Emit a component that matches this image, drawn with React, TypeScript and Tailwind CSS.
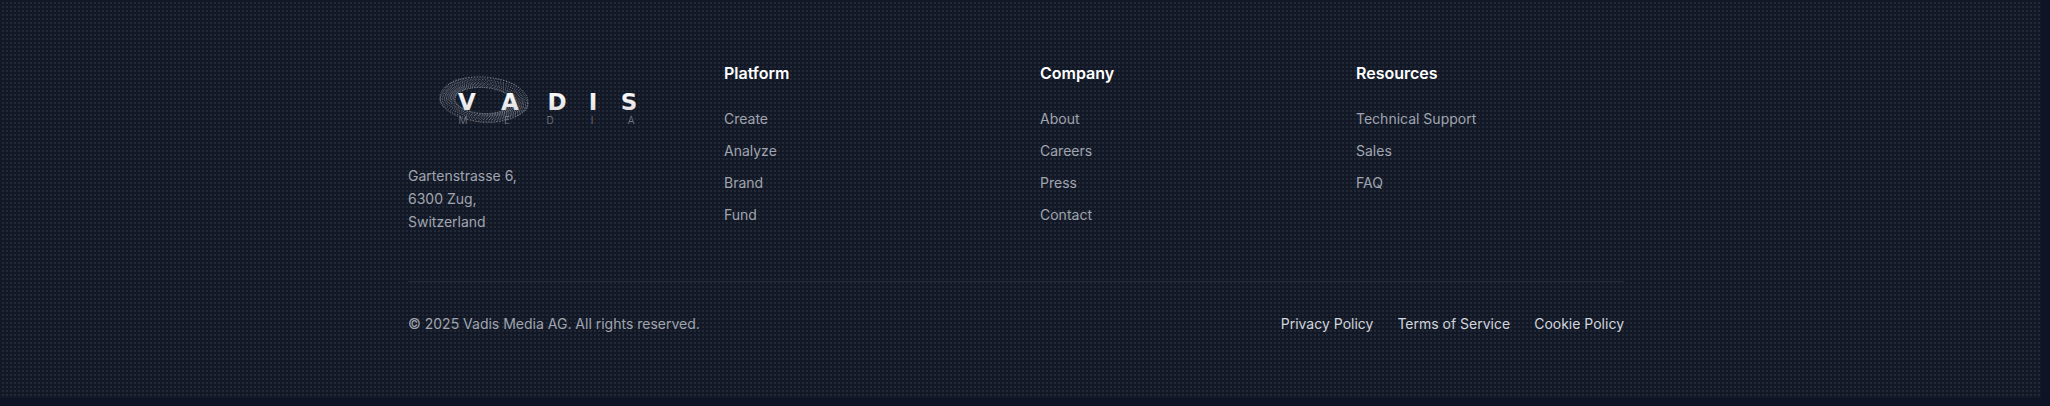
const columns = [
  { title: "Platform", links: ["Create", "Analyze", "Brand", "Fund"] },
  { title: "Company", links: ["About", "Careers", "Press", "Contact"] },
  { title: "Resources", links: ["Technical Support", "Sales", "FAQ"] },
];

const legal = ["Privacy Policy", "Terms of Service", "Cookie Policy"];

// Fine strands that sweep from the outer rim of the ring to its inner rim.
const strands = Array.from({ length: 84 }, (_, i) => {
  const a = (i / 84) * Math.PI * 2;
  const b = a + 0.38;
  const wobble = 1 + 0.03 * Math.sin(a * 5);
  const x1 = 48 + 44 * wobble * Math.cos(a);
  const y1 = 31.5 + 22.5 * wobble * Math.sin(a) + 2.5 * Math.cos(a);
  const x2 = 47 + 28 * Math.cos(b);
  const y2 = 32.5 + 13 * Math.sin(b) + 1.5 * Math.cos(b);
  return `M${x1.toFixed(1)} ${y1.toFixed(1)}L${x2.toFixed(1)} ${y2.toFixed(1)}`;
}).join("");

const word = [
  ["V", 31],
  ["A", 74],
  ["D", 121],
  ["I", 157],
  ["S", 193],
] as const;

const subWord = [
  ["M", 27],
  ["E", 71],
  ["D", 114],
  ["I", 156],
  ["A", 195],
] as const;

function Logo() {
  return (
    <svg viewBox="0 0 212 64" className="h-16 w-[212px]" role="img" aria-label="Vadis Media">
      <defs>
        <linearGradient id="metal" x1="0" y1="0" x2="0" y2="1">
          <stop offset="0" stopColor="#ffffff" />
          <stop offset="1" stopColor="#dcdce0" />
        </linearGradient>
      </defs>
      <g fill="none" stroke="#b8bcc4">
        <path d={strands} strokeWidth="0.9" strokeDasharray="1.2 1" opacity="0.5" />
        <ellipse cx="48" cy="31.5" rx="44" ry="22.5" strokeWidth="0.8" strokeDasharray="1.5 1.2" opacity="0.6" transform="rotate(4 48 31.5)" />
        <ellipse cx="48" cy="31.5" rx="39" ry="19.5" strokeWidth="0.6" strokeDasharray="1 1.6" opacity="0.4" transform="rotate(6 48 31.5)" />
        <ellipse cx="47" cy="32" rx="33" ry="16" strokeWidth="0.6" strokeDasharray="1 1.6" opacity="0.4" transform="rotate(3 47 32)" />
        <ellipse cx="47" cy="32.5" rx="28" ry="13" strokeWidth="0.8" strokeDasharray="1.5 1" opacity="0.6" transform="rotate(3 47 32.5)" />
      </g>
      <g textAnchor="middle" fill="url(#metal)" className="font-['DejaVu_Sans',sans-serif] text-[23px] font-bold">
        {word.map(([c, x]) => (
          <text key={c} x={x} y="42">{c}</text>
        ))}
      </g>
      <g textAnchor="middle" fill="#7d818a" className="font-['Inter',sans-serif] text-[10px] font-light">
        {subWord.map(([c, x]) => (
          <text key={c} x={x} y="56">{c}</text>
        ))}
      </g>
    </svg>
  );
}

export default function App() {
  return (
    <div className="min-h-screen bg-[#0e1426] pr-[9px] font-['Inter',sans-serif] text-sm">
      <footer className="bg-[#121826] bg-[conic-gradient(from_270deg_at_2px_2px,#222a38_90deg,transparent_0)] bg-[length:4px_4px] bg-[position:2px_2px] pt-[61px] pr-[9px] pb-16">
        <div className="mx-auto max-w-7xl px-8">
          <div className="grid grid-cols-4 gap-12">
            <div>
              <div className="flex justify-center pt-[7px]">
                <Logo />
              </div>
              <address className="mt-8 leading-[23px] text-[#a0a4ae] not-italic">
                Gartenstrasse 6,
                <br />
                6300 Zug,
                <br />
                Switzerland
              </address>
            </div>
            {columns.map((column) => (
              <nav key={column.title} aria-label={column.title}>
                <h3 className="text-base font-semibold text-white">{column.title}</h3>
                <ul className="mt-6 space-y-3 text-[#a0a4ae]">
                  {column.links.map((link) => (
                    <li key={link}>
                      <a href="#" className="hover:text-white">{link}</a>
                    </li>
                  ))}
                </ul>
              </nav>
            ))}
          </div>
          <div className="mt-12 flex items-center justify-between border-t border-gray-800 pt-8">
            <p className="text-[#a0a4ae]">© 2025 Vadis Media AG. All rights reserved.</p>
            <nav aria-label="Legal" className="flex gap-6 text-gray-300">
              {legal.map((item) => (
                <a key={item} href="#" className="hover:text-white">{item}</a>
              ))}
            </nav>
          </div>
        </div>
      </footer>
    </div>
  );
}
